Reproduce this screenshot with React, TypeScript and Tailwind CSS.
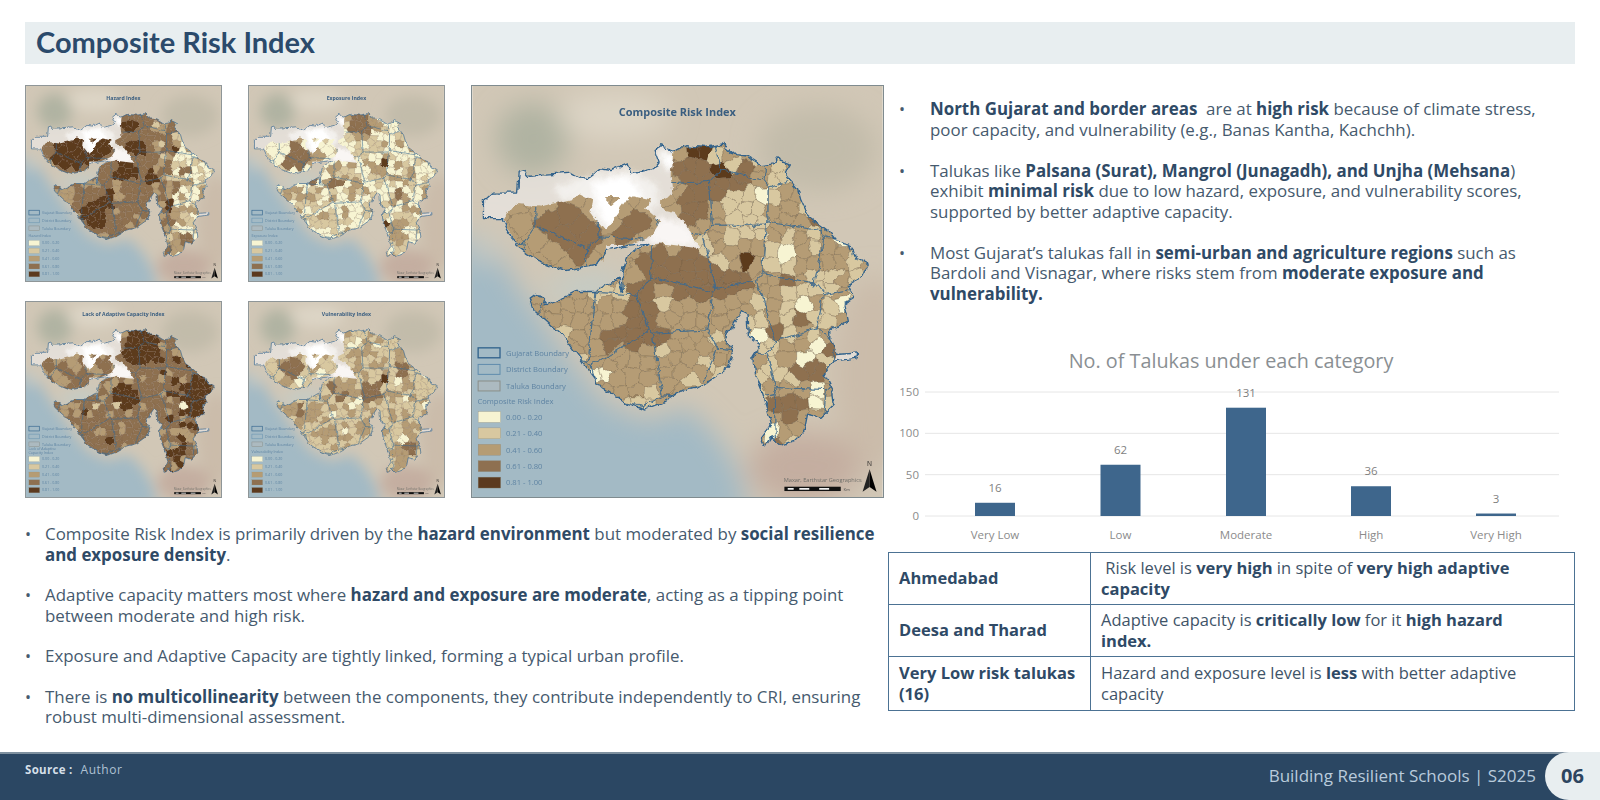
import React from "react";

type P = [number, number];
const COLORS = ["#f7f4d2", "#d8c8a0", "#b59c74", "#8e7050", "#5c3a1e"];

function rng(seed: number) {
  let a = seed;
  return () => {
    a = (a + 0x6d2b79f5) | 0;
    let t = Math.imul(a ^ (a >>> 15), 1 | a);
    t = (t + Math.imul(t ^ (t >>> 7), 61 | t)) ^ t;
    return ((t ^ (t >>> 14)) >>> 0) / 4294967296;
  };
}

function voronoi(seeds: P[], range: number): P[][] {
  return seeds.map((s) => {
    let poly: P[] = [[0, 0], [1340, 0], [1340, 1300], [0, 1300]];
    for (const o of seeds) {
      if (o === s) continue;
      const dx = o[0] - s[0];
      const dy = o[1] - s[1];
      if (dx * dx + dy * dy > range * range) continue;
      const mx = (o[0] + s[0]) / 2;
      const my = (o[1] + s[1]) / 2;
      const out: P[] = [];
      for (let i = 0; i < poly.length; i++) {
        const a = poly[i];
        const b = poly[(i + 1) % poly.length];
        const da = (a[0] - mx) * dx + (a[1] - my) * dy;
        const db = (b[0] - mx) * dx + (b[1] - my) * dy;
        if (da <= 0) out.push(a);
        if (da < 0 !== db < 0) {
          const t = da / (da - db);
          out.push([a[0] + (b[0] - a[0]) * t, a[1] + (b[1] - a[1]) * t]);
        }
      }
      poly = out;
    }
    return poly;
  });
}

const toD = (p: P[]) => "M" + p.map((q) => q[0].toFixed(0) + " " + q[1].toFixed(0)).join("L") + "Z";

const r0 = rng(11);
const talukaSeeds: P[] = [];
{
  let iy = 0;
  for (let y = 190; y < 1140; y += 42) {
    iy++;
    let ix = 0;
    for (let x = 120; x < 1260; x += 42) {
      ix++;
      const sparse = y < 620 && x < 640;
      if (sparse && (ix + iy) % 2) continue;
      talukaSeeds.push([x + (r0() - 0.5) * 30, y + (r0() - 0.5) * 30]);
    }
  }
}
const talukaCells = voronoi(talukaSeeds, 210);
const talukaRand = talukaSeeds.map(() => r0());

const districtSeeds: P[] = [];
for (let y = 230; y < 1140; y += 165) {
  for (let x = 150; x < 1260; x += 175) {
    districtSeeds.push([x + (r0() - 0.5) * 90, y + (r0() - 0.5) * 90]);
  }
}
const districtD = voronoi(districtSeeds, 600).map(toD).join("");

const STATE =
  "M82 375L110 350L185 350L190 290L205 285L215 300L280 295L345 290L390 315L435 280L470 285L520 265L530 295L590 280L615 265L600 225L620 210L660 225L690 210L750 215L800 205L840 240L880 245L920 270L960 265L970 250L1005 265L990 290L1030 340L1040 375L1060 420L1120 465L1150 500L1190 510L1205 550L1240 570L1220 610L1180 630L1200 670L1170 690L1180 740L1130 770L1130 800L1150 840L1210 835L1210 850L1140 860L1110 900L1135 950L1140 990L1100 1030L1060 1020L1050 1070L1020 1100L980 1115L950 1085L930 1115L920 1090L950 1050L940 1010L920 950L900 900L895 850L920 810L885 790L880 720L860 710L840 740L810 790L835 830L820 880L750 930L680 950L620 985L570 1005L510 985L440 940L380 860L320 780L230 700L220 670L240 655L270 690L340 660L360 650L420 650L490 610L505 650L500 600L520 540L575 505L520 510L450 530L420 570L330 590L250 560L180 510L140 430L82 430Z";
const KUTCH =
  "M145 430L180 385L260 395L350 375L370 350L410 370L405 410L450 465L500 395L525 360L585 375L570 400L615 440L590 480L520 510L450 510L445 550L400 575L325 590L250 560L185 515Z";
const ISLAND = "M445 365L500 365L470 390Z";
const MAIN =
  "M655 225L690 210L750 215L800 205L840 240L880 245L920 270L960 265L970 250L1005 265L990 290L1030 340L1040 375L1060 420L1120 465L1150 500L1190 510L1205 550L1240 570L1220 610L1180 630L1200 670L1170 690L1180 740L1130 770L1130 800L1150 840L1140 860L1110 900L1135 950L1140 990L1100 1030L1060 1020L1050 1070L1020 1100L980 1115L950 1085L930 1115L920 1090L950 1050L940 1010L920 950L900 900L895 850L920 810L885 790L880 720L860 710L840 740L810 790L835 830L820 880L750 930L680 950L620 985L570 1005L510 985L440 940L380 860L320 780L230 700L220 670L240 655L270 690L340 660L360 650L420 650L490 610L505 650L500 600L520 540L575 510L620 505L735 520L690 450L660 410L615 400L615 375L655 355L650 300Z";

type Spot = [number, number, number, number];
type Cfg = {
  id: string;
  title: string;
  legend: string[];
  base: (x: number, y: number, r: number) => number;
  spots: Spot[];
};

const MAPS: Record<string, Cfg> = {
  hazard: {
    id: "hz",
    title: "Hazard Index",
    legend: ["Hazard Index"],
    base: (x, y, r) =>
      x < 850 ? (y < 620 ? 3 : r < 0.15 ? 2 : 3) : x < 1000 ? (r < 0.4 ? 3 : r < 0.75 ? 2 : 1) : r < 0.45 ? 0 : r < 0.8 ? 1 : 2,
    spots: [
      [230, 500, 60, 2], [310, 440, 110, 4], [430, 470, 90, 4], [540, 430, 70, 4], [705, 282, 55, 4], [800, 292, 35, 3],
      [739, 419, 60, 4], [686, 566, 70, 4], [854, 608, 45, 4], [487, 839, 80, 4], [560, 755, 55, 4], [980, 419, 30, 4],
      [960, 797, 25, 4], [640, 640, 25, 2], [300, 720, 70, 2], [1060, 560, 40, 3], [1070, 1000, 40, 3],
    ],
  },
  exposure: {
    id: "ex",
    title: "Exposure Index",
    legend: ["Exposure Index"],
    base: (x, y, r) => (r < 0.5 ? 0 : r < 0.85 ? 1 : 2),
    spots: [
      [230, 470, 80, 0], [357, 481, 85, 3], [470, 480, 60, 2], [755, 271, 75, 3], [850, 280, 40, 2], [903, 521, 25, 4],
      [860, 560, 50, 2], [1000, 700, 40, 3], [1040, 790, 30, 2], [1000, 910, 60, 2], [930, 910, 20, 4], [590, 650, 40, 3],
      [450, 620, 40, 3], [1075, 580, 30, 2],
    ],
  },
  lack: {
    id: "ac",
    title: "Lack of Adaptive Capacity Index",
    legend: ["Lack of Adaptive", "Capacity Index"],
    base: (x, y, r) => (y < 620 && x < 640 ? (r < 0.5 ? 3 : 2) : x > 900 ? (r < 0.55 ? 3 : r < 0.8 ? 2 : 4) : r < 0.85 ? 3 : 2),
    spots: [
      [791, 311, 125, 4], [1148, 584, 85, 4], [1127, 710, 55, 4], [665, 626, 90, 4], [413, 731, 30, 4], [560, 900, 25, 4],
      [1000, 500, 20, 0], [1050, 700, 18, 0], [640, 690, 25, 1], [480, 700, 30, 1], [1040, 970, 25, 4],
    ],
  },
  vuln: {
    id: "vu",
    title: "Vulnerability Index",
    legend: ["Vulnerability Index"],
    base: (x, y, r) => (r < 0.6 ? 1 : r < 0.95 ? 2 : 0),
    spots: [
      [819, 605, 70, 3], [903, 521, 25, 4], [1039, 448, 50, 3], [567, 574, 40, 3], [336, 437, 70, 3], [230, 440, 30, 0],
      [1071, 941, 50, 3], [934, 910, 15, 4], [720, 300, 28, 0], [880, 320, 30, 0], [380, 530, 25, 0], [650, 640, 30, 3],
      [380, 720, 35, 3], [1020, 880, 40, 0], [330, 830, 20, 0], [760, 830, 50, 2],
    ],
  },
  cri: {
    id: "cr",
    title: "Composite Risk Index",
    legend: ["Composite Risk Index"],
    base: (x, y, r) => (x > 900 ? (r < 0.3 ? 1 : r < 0.88 ? 2 : r < 0.94 ? 3 : 0) : y < 620 && x < 640 ? 2 : r < 0.14 ? 1 : 2),
    spots: [
      [730, 245, 42, 4], [810, 285, 34, 4], [890, 545, 24, 4], [700, 290, 55, 3], [760, 330, 40, 3], [855, 310, 35, 3],
      [330, 420, 60, 3], [380, 490, 70, 3], [530, 445, 65, 3], [715, 410, 50, 3], [610, 555, 50, 3], [690, 590, 65, 3],
      [770, 610, 55, 3], [850, 610, 40, 3], [570, 650, 45, 3], [560, 755, 65, 3], [480, 795, 32, 3], [870, 430, 75, 1],
      [1000, 560, 26, 1], [1075, 640, 40, 1], [800, 785, 35, 1], [600, 980, 30, 1], [920, 350, 18, 0], [1040, 680, 22, 0],
      [1085, 830, 40, 0], [1100, 975, 28, 0], [430, 900, 24, 0], [910, 790, 28, 0], [940, 960, 20, 0], [940, 1090, 18, 0],
      [935, 910, 14, 3], [1010, 1000, 40, 3], [1060, 910, 40, 3],
    ],
  },
};

function classOf(cfg: Cfg, i: number) {
  const [x, y] = talukaSeeds[i];
  const r = talukaRand[i];
  let c = cfg.base(x, y, r);
  for (const s of cfg.spots) {
    const dx = x - s[0];
    const dy = y - s[1];
    if (dx * dx + dy * dy < s[2] * s[2]) c = s[3];
  }
  return c;
}

function MapFigure({ cfg, big }: { cfg: Cfg; big?: boolean }) {
  const id = cfg.id;
  const legendStart = 985;
  return (
    <svg
      viewBox="48 30 1239 1240"
      className={
        big
          ? "w-[413px] h-[413px] shrink-0 border border-[#7f8b8f] blur-[0.4px]"
          : "w-[197px] h-[197px] border border-[#8f9698] blur-[0.45px]"
      }
    >
      <defs>
        <filter id={id + "b"} x="-10%" y="-10%" width="120%" height="120%">
          <feGaussianBlur stdDeviation="40" />
        </filter>
        <filter id={id + "s"} x="-10%" y="-10%" width="120%" height="120%">
          <feGaussianBlur stdDeviation="10" />
        </filter>
        <filter id={id + "w"} filterUnits="userSpaceOnUse" x="48" y="100" width="1239" height="1100">
          <feTurbulence type="fractalNoise" baseFrequency="0.035" numOctaves="3" seed="4" />
          <feDisplacementMap in="SourceGraphic" scale="22" xChannelSelector="R" yChannelSelector="G" />
        </filter>
        <clipPath id={id + "c"}>
          <path d={KUTCH} />
          <path d={ISLAND} />
          <path d={MAIN} />
        </clipPath>
        <clipPath id={id + "f"}>
          <rect x="48" y="30" width="1239" height="1240" />
        </clipPath>
      </defs>
      <g clipPath={`url(#${id}f)`}>
        <rect x="48" y="30" width="1239" height="1240" fill="#d1c7b6" />
        <g filter={`url(#${id}b)`}>
          <ellipse cx="230" cy="190" rx="110" ry="110" fill="#b0b3a2" />
          <ellipse cx="480" cy="120" rx="170" ry="70" fill="#ddd5c6" />
          <ellipse cx="1090" cy="220" rx="180" ry="130" fill="#c2bcaa" />
          <ellipse cx="1260" cy="900" rx="120" ry="300" fill="#cbbcaa" />
          <ellipse cx="1050" cy="1180" rx="170" ry="110" fill="#c4aea0" />
          <path
            d="M-40 470L110 500L190 640L300 800L440 980L570 1040L700 1000L790 1090L850 1190L890 1340L-40 1340Z"
            fill="#a3bac5"
          />
          <path d="M520 590L300 620L230 650L420 680Z" fill="#bfcdcb" />
          <ellipse cx="80" cy="520" rx="50" ry="50" fill="#c4c8c2" />
        </g>
        <g filter={`url(#${id}w)`}>
          <path d={STATE} fill="#e9e6e2" fillOpacity="0.75" />
          <g filter={`url(#${id}s)`}>
            <path d="M300 330L400 300L530 285L610 330L610 390L560 420L520 430L490 470L450 480L420 430L380 390L300 360Z" fill="#ffffff" fillOpacity="0.55" />
            <path d="M410 320L520 300L570 370L510 400L470 465L430 420Z" fill="#ffffff" />
            <path d="M618 222L660 235L655 285L622 272Z" fill="#ffffff" />
            <path d="M615 425L690 440L735 515L640 515L570 495Z" fill="#f9f6f4" />
          </g>
          <g clipPath={`url(#${id}c)`}>
            {talukaCells.map((c, i) => (
              <path
                key={i}
                d={toD(c)}
                fill={COLORS[classOf(cfg, i)]}
                stroke="#6d5a42"
                strokeOpacity="0.65"
                strokeWidth="1.6"
              />
            ))}
            <path d={districtD} fill="none" stroke="#3e6a8f" strokeOpacity="0.7" strokeWidth="3" />
          </g>
          <path d={STATE} fill="none" stroke="#30628c" strokeWidth="4" strokeLinejoin="round" />
        </g>
        <g fontFamily="'Open Sans',sans-serif">
          <text x="667" y="120" textAnchor="middle" fontSize="33" fontWeight="700" fill="#3a5e80">
            {cfg.title}
          </text>
          <rect x="66" y="820" width="66" height="30" fill="none" stroke="#30628c" strokeWidth="4" />
          <rect x="66" y="870" width="66" height="30" fill="none" stroke="#5f8cad" strokeWidth="3" />
          <rect x="66" y="920" width="66" height="30" fill="#b3bbbd" fillOpacity="0.6" stroke="#8a8d88" strokeWidth="3" />
          <text x="150" y="844" fontSize="23" fill="#5f84a3">Gujarat Boundary</text>
          <text x="150" y="894" fontSize="23" fill="#5f84a3">District Boundary</text>
          <text x="150" y="944" fontSize="23" fill="#5f84a3">Taluka Boundary</text>
          {cfg.legend.map((l, i) => (
            <text key={l} x="64" y={cfg.legend.length > 1 ? 974 + i * 24 : legendStart + 3} fontSize="23" fill="#5f84a3">
              {l}
            </text>
          ))}
          {["0.00 - 0.20", "0.21 - 0.40", "0.41 - 0.60", "0.61 - 0.80", "0.81 - 1.00"].map((t, i) => (
            <g key={t}>
              <rect x="66" y={1012 + i * 49.5} width="68" height="33" fill={COLORS[i]} stroke="#8d8b7d" strokeWidth="1" />
              <text x="150" y={1037 + i * 49.5} fontSize="23" fill="#5f84a3">{t}</text>
            </g>
          ))}
          <text x="988" y="1224" fontSize="17" fill="#6f6f6a">Maxar, Earthstar Geographics</text>
          <rect x="990" y="1239" width="170" height="13" fill="#111111" />
          <rect x="1000" y="1243" width="18" height="5" fill="#ffffff" />
          <rect x="1035" y="1243" width="30" height="5" fill="#ffffff" />
          <rect x="1095" y="1243" width="30" height="5" fill="#ffffff" />
          <text x="1168" y="1252" fontSize="13" fill="#555555">Km</text>
          <text x="1247" y="1176" fontSize="20" textAnchor="middle" fill="#222222">N</text>
          <path d="M1247 1186L1226 1254L1247 1240Z" fill="#222222" />
          <path d="M1247 1186L1268 1254L1247 1240Z" fill="#000000" />
        </g>
      </g>
    </svg>
  );
}

const B = ({ children }: { children: React.ReactNode }) => (
  <strong className="font-bold text-[#2f4a66]">{children}</strong>
);

function Item({ children }: { children: React.ReactNode }) {
  return (
    <li className="flex">
      <span className="w-[20px] shrink-0 text-[16px]">•</span>
      <span>{children}</span>
    </li>
  );
}

const BARS = [
  { x: 107, v: 16, l: "Very Low" },
  { x: 232.5, v: 62, l: "Low" },
  { x: 358, v: 131, l: "Moderate" },
  { x: 483, v: 36, l: "High" },
  { x: 608, v: 3, l: "Very High" },
];

function Chart() {
  const y0 = 166;
  const k = 124 / 150;
  return (
    <svg viewBox="0 -8 687 204" className="w-[687px] h-[204px] mt-[38px] shrink-0">
      <text x="343" y="18" textAnchor="middle" fontSize="19.8" fill="#8a8f93">
        No. of Talukas under each category
      </text>
      {[0, 50, 100, 150].map((t) => (
        <g key={t}>
          <line x1="37" x2="671" y1={y0 - t * k} y2={y0 - t * k} stroke="#e6e6e6" strokeWidth="1" />
          <text x="31" y={y0 - t * k + 4} textAnchor="end" fontSize="11.5" fill="#8b8b8b">
            {t}
          </text>
        </g>
      ))}
      {BARS.map((b) => (
        <g key={b.l}>
          <rect x={b.x - 20} y={y0 - b.v * k} width="40" height={b.v * k} fill="#3e668c" />
          <text x={b.x} y={y0 - b.v * k - 11} textAnchor="middle" fontSize="11.5" fill="#7f7f7f">
            {b.v}
          </text>
          <text x={b.x} y="189" textAnchor="middle" fontSize="11.5" fill="#8b8b8b">
            {b.l}
          </text>
        </g>
      ))}
    </svg>
  );
}

export default function App() {
  return (
    <div className="w-[1600px] h-[800px] bg-white flex flex-col overflow-hidden font-['Open_Sans',sans-serif] text-[#465a6e] text-[16.9px] leading-[20.5px]">
      <div className="mt-[22px] mx-[25px] h-[42px] shrink-0 bg-[#e8eef0] flex items-center pl-[11px] pb-[4px]">
        <h1 className="font-['Lato',sans-serif] font-bold text-[29px] leading-none text-[#2b4a6b]">
          Composite Risk Index
        </h1>
      </div>

      <div className="flex mt-[21px] pl-[25px] flex-1 min-h-0">
        <div className="w-[859px] shrink-0">
          <div className="flex gap-[26px]">
            <div className="grid grid-cols-[197px_197px] gap-x-[26px] gap-y-[19px] w-[420px]">
              <MapFigure cfg={MAPS.hazard} />
              <MapFigure cfg={MAPS.exposure} />
              <MapFigure cfg={MAPS.lack} />
              <MapFigure cfg={MAPS.vuln} />
            </div>
            <MapFigure cfg={MAPS.cri} big />
          </div>
          <ul className="mt-[26px] flex flex-col gap-[20px]">
            <Item>
              Composite Risk Index is primarily driven by the <B>hazard environment</B> but moderated by{" "}
              <B>social resilience and exposure density</B>.
            </Item>
            <Item>
              Adaptive capacity matters most where <B>hazard and exposure are moderate</B>, acting as a tipping point
              between moderate and high risk.
            </Item>
            <Item>Exposure and Adaptive Capacity are tightly linked, forming a typical urban profile.</Item>
            <Item>
              There is <B>no multicollinearity</B> between the components, they contribute independently to CRI,
              ensuring robust multi-dimensional assessment.
            </Item>
          </ul>
        </div>

        <div className="ml-[4px] w-[687px] shrink-0 flex flex-col">
          <ul className="mt-[14px] ml-[11px] w-[660px] flex flex-col gap-[20.5px]">
            <li className="flex">
              <span className="w-[31px] shrink-0 text-[16px]">•</span>
              <span>
                <B>North Gujarat and border areas</B>&nbsp; are at <B>high risk</B> because of climate stress, poor
                capacity, and vulnerability (e.g., Banas Kantha, Kachchh).
              </span>
            </li>
            <li className="flex">
              <span className="w-[31px] shrink-0 text-[16px]">•</span>
              <span>
                Talukas like <B>Palsana (Surat), Mangrol (Junagadh), and Unjha (Mehsana</B>) exhibit{" "}
                <B>minimal risk</B> due to low hazard, exposure, and vulnerability scores, supported by better adaptive
                capacity.
              </span>
            </li>
            <li className="flex">
              <span className="w-[31px] shrink-0 text-[16px]">•</span>
              <span>
                Most Gujarat’s talukas fall in <B>semi-urban and agriculture regions</B> such as Bardoli and Visnagar,
                where risks stem from <B>moderate exposure and vulnerability.</B>
              </span>
            </li>
          </ul>
          <Chart />
          <table className="mt-[6px] w-[687px] border-collapse table-fixed text-[#3f5468] text-[16.5px]">
            <colgroup>
              <col className="w-[202px]" />
              <col />
            </colgroup>
            <tbody>
              <tr className="h-[52px]">
                <td className="border border-[#4c7293] px-[10px] font-bold text-[#2f4a66]">Ahmedabad</td>
                <td className="border border-[#4c7293] pl-[10px] pr-[40px]">
                  &nbsp;Risk level is <B>very high</B> in spite of <B>very high adaptive capacity</B>
                </td>
              </tr>
              <tr className="h-[52px]">
                <td className="border border-[#4c7293] px-[10px] font-bold text-[#2f4a66]">Deesa and Tharad</td>
                <td className="border border-[#4c7293] pl-[10px] pr-[40px]">
                  Adaptive capacity is <B>critically low</B> for it <B>high hazard index.</B>
                </td>
              </tr>
              <tr className="h-[54px]">
                <td className="border border-[#4c7293] px-[10px] font-bold text-[#2f4a66]">Very Low risk talukas (16)</td>
                <td className="border border-[#4c7293] pl-[10px] pr-[40px]">
                  Hazard and exposure level is <B>less</B> with better adaptive capacity
                </td>
              </tr>
            </tbody>
          </table>
        </div>
      </div>

      <footer className="h-[48px] shrink-0 bg-[#2b4763] border-t-2 border-[#7e909f] flex items-stretch">
        <div className="pl-[25px] pt-[7px] flex items-baseline">
          <span className="font-bold text-[11.5px] leading-[18px] tracking-[0.3px] text-[#d5dfe8]">Source :</span>
          <span className="ml-[8px] text-[12px] leading-[18px] tracking-[0.5px] text-[#afc2d4]">Author</span>
        </div>
        <div className="ml-auto pb-[2px] flex items-center text-[17px] text-[#b9cbdc]">Building Resilient Schools | S2025</div>
        <div className="ml-[9px] w-[55px] -mt-[2px] bg-[#e8eef0] rounded-l-[24px] flex items-center justify-center font-bold text-[20px] text-[#2d4560]">
          06
        </div>
      </footer>
    </div>
  );
}
